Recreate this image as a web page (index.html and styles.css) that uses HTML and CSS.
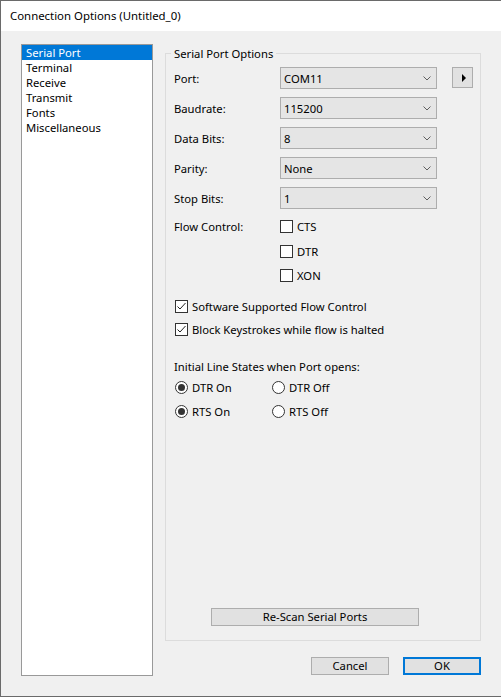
FILE: index.html
```html
<!DOCTYPE html>
<html>
<head>
<meta charset="utf-8">
<link rel="stylesheet" href="styles.css">
</head>
<body>
<div class="window">
  <div class="titlebar">Connection Options (Untitled_0)</div>
  <div class="content">
    <ul class="listbox">
      <li class="selected">Serial Port</li>
      <li>Terminal</li>
      <li>Receive</li>
      <li>Transmit</li>
      <li>Fonts</li>
      <li>Miscellaneous</li>
    </ul>
    <div class="main">
      <div class="group">
        <span class="legend">Serial Port Options</span>
        <div class="row">
          <span class="label">Port:</span>
          <div class="combo"><span>COM11</span><svg class="chev" width="8" height="5" viewBox="0 0 8 5"><polyline points="0.5,0.5 4,4 7.5,0.5" fill="none" stroke="#606060" stroke-width="1"/></svg></div>
          <div class="arrow-btn"><svg width="5" height="8" viewBox="0 0 5 8"><polygon points="0,0 4,4 0,8" fill="#000"/></svg></div>
        </div>
        <div class="row">
          <span class="label">Baudrate:</span>
          <div class="combo"><span>115200</span><svg class="chev" width="8" height="5" viewBox="0 0 8 5"><polyline points="0.5,0.5 4,4 7.5,0.5" fill="none" stroke="#606060" stroke-width="1"/></svg></div>
        </div>
        <div class="row">
          <span class="label">Data Bits:</span>
          <div class="combo"><span>8</span><svg class="chev" width="8" height="5" viewBox="0 0 8 5"><polyline points="0.5,0.5 4,4 7.5,0.5" fill="none" stroke="#606060" stroke-width="1"/></svg></div>
        </div>
        <div class="row">
          <span class="label">Parity:</span>
          <div class="combo"><span>None</span><svg class="chev" width="8" height="5" viewBox="0 0 8 5"><polyline points="0.5,0.5 4,4 7.5,0.5" fill="none" stroke="#606060" stroke-width="1"/></svg></div>
        </div>
        <div class="row">
          <span class="label">Stop Bits:</span>
          <div class="combo"><span>1</span><svg class="chev" width="8" height="5" viewBox="0 0 8 5"><polyline points="0.5,0.5 4,4 7.5,0.5" fill="none" stroke="#606060" stroke-width="1"/></svg></div>
        </div>

        <div class="flow">
          <span class="label flow-label">Flow Control:</span>
          <div class="flow-checks">
            <div class="check"><span class="box"></span><span>CTS</span></div>
            <div class="check"><span class="box"></span><span>DTR</span></div>
            <div class="check"><span class="box"></span><span>XON</span></div>
          </div>
        </div>

        <div class="opts">
          <div class="check"><span class="box"><svg width="11" height="11" viewBox="0 0 11 11"><polyline points="1.5,5.5 4,8 9.5,2" fill="none" stroke="#202020" stroke-width="1"/></svg></span><span>Software Supported Flow Control</span></div>
          <div class="check"><span class="box"><svg width="11" height="11" viewBox="0 0 11 11"><polyline points="1.5,5.5 4,8 9.5,2" fill="none" stroke="#202020" stroke-width="1"/></svg></span><span>Block Keystrokes while flow is halted</span></div>
        </div>

        <div class="section-title">Initial Line States when Port opens:</div>
        <div class="radios">
          <div class="radio"><span class="circle on"></span><span>DTR On</span></div>
          <div class="radio"><span class="circle"></span><span>DTR Off</span></div>
          <div class="radio"><span class="circle on"></span><span>RTS On</span></div>
          <div class="radio"><span class="circle"></span><span>RTS Off</span></div>
        </div>

        <div class="btn rescan">Re-Scan Serial Ports</div>
      </div>
      <div class="buttons">
        <div class="btn dlg">Cancel</div>
        <div class="btn dlg ok">OK</div>
      </div>
    </div>
  </div>
</div>
</body>
</html>
```

FILE: styles.css
```css
html, body {
  margin: 0;
  padding: 0;
  background: #ffffff;
}

body {
  font-family: "Noto Sans", "Open Sans", sans-serif;
  font-size: 11.25px;
  line-height: 15px;
  color: #000;
}

.window {
  width: 500px;
  height: 695px;
  border-top: 1px solid #6a6a6a;
  border-left: 1px solid #6a6a6a;
  border-bottom: 1px solid #6a6a6a;
  box-shadow: 0 1px 0 #c4c4c4, 0 2px 0 #e2e2e2;
  background: #f0f0f0;
  display: flex;
  flex-direction: column;
  overflow: hidden;
}

.titlebar {
  height: 30px;
  background: #ffffff;
  padding-left: 9px;
  line-height: 30px;
  font-size: 11.4px;
  flex: none;
}

.content {
  flex: 1;
  display: flex;
  align-items: flex-start;
}

.listbox {
  list-style: none;
  margin: 13px 0 0 20px;
  padding: 0;
  width: 130px;
  height: 630px;
  border: 1px solid #999999;
  background: #ffffff;
  flex: none;
}

.listbox li {
  height: 15px;
  line-height: 15px;
  padding-left: 4px;
}

.listbox li.selected {
  background: #0078d7;
  color: #ffffff;
}

.main {
  margin-left: 12px;
  display: flex;
  flex-direction: column;
  width: 316px;
}

.group {
  position: relative;
  margin-top: 22px;
  height: 586px;
  width: 306px;
  border: 1px solid #dcdcdc;
  display: flex;
  flex-direction: column;
  padding-left: 8px;
}

.legend {
  position: absolute;
  top: -8px;
  left: 5px;
  padding: 0 3px;
  background: #f0f0f0;
}

.row {
  display: flex;
  align-items: center;
  height: 22px;
  margin-top: 8px;
}

.row:first-of-type {
  margin-top: 13px;
}

.label {
  width: 106px;
  flex: none;
}

.combo {
  width: 147px;
  height: 20px;
  border: 1px solid #adadad;
  background: #e5e5e5;
  display: flex;
  align-items: center;
  justify-content: space-between;
  padding: 0 5px 0 3px;
}

.arrow-btn {
  margin-left: 15px;
  width: 21px;
  height: 21px;
  border: 1px solid #adadad;
  background: #e1e1e1;
  display: flex;
  align-items: center;
  justify-content: center;
  padding-left: 3px;
  box-sizing: border-box;
  align-self: flex-start;
}

.flow {
  display: flex;
  margin-top: 11px;
}

.flow-label {
  line-height: 13px;
}

.flow-checks {
  display: flex;
  flex-direction: column;
  gap: 11.5px;
}

.check {
  display: flex;
  align-items: center;
  height: 13px;
  gap: 4px;
}

.box {
  width: 11px;
  height: 11px;
  border: 1px solid #333333;
  background: #ffffff;
  flex: none;
  display: flex;
}

.opts {
  display: flex;
  flex-direction: column;
  gap: 10px;
  margin-top: 18px;
  margin-left: 1px;
}

.section-title {
  margin-top: 23px;
}

.radios {
  display: grid;
  grid-template-columns: 97px 97px;
  row-gap: 11px;
  margin-top: 7px;
  margin-left: 1px;
}

.radio {
  display: flex;
  align-items: center;
  height: 13px;
  gap: 4px;
}

.circle {
  width: 11px;
  height: 11px;
  border: 1px solid #333333;
  border-radius: 50%;
  background: #ffffff;
  flex: none;
  display: flex;
  align-items: center;
  justify-content: center;
}

.circle.on::after {
  content: "";
  width: 7px;
  height: 7px;
  border-radius: 50%;
  background: #333333;
}

.btn {
  border: 1px solid #adadad;
  background: #e1e1e1;
  text-align: center;
  box-sizing: border-box;
  height: 18px;
  line-height: 16px;
}

.rescan {
  margin-top: auto;
  margin-bottom: 14px;
  margin-left: 37px;
  width: 208px;
}

.buttons {
  display: flex;
  justify-content: flex-end;
  gap: 14px;
  margin-top: 16px;
}

.dlg {
  width: 78px;
}

.ok {
  border: 2px solid #0078d7;
  line-height: 14px;
}
```
